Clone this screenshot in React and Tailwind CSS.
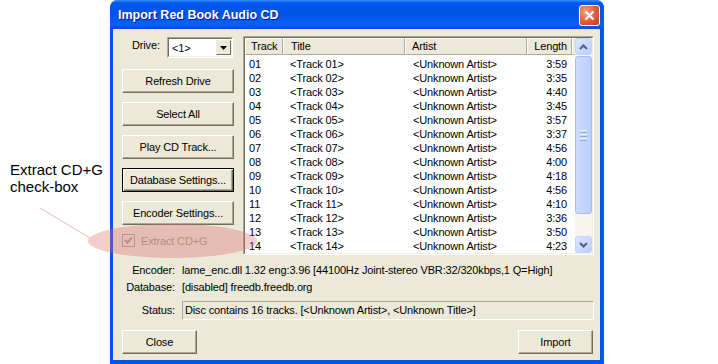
import React from 'react'

const tracks = [
  ['01', '3:59'], ['02', '3:35'], ['03', '4:40'], ['04', '3:45'], ['05', '3:57'],
  ['06', '3:37'], ['07', '4:56'], ['08', '4:00'], ['09', '4:18'], ['10', '4:56'],
  ['11', '4:10'], ['12', '3:36'], ['13', '3:50'], ['14', '4:23'],
]

function Button({ children, isDefault, className = '' }) {
  return (
    <div
      className={
        'flex items-center justify-center h-[24px] bg-[#ece9d8] ' +
        (isDefault
          ? 'border border-black shadow-[inset_1px_1px_0_#fff,inset_-1px_-1px_0_#716f64,inset_-2px_-2px_0_#aca899] '
          : 'border border-t-white border-l-white border-r-[#716f64] border-b-[#716f64] shadow-[inset_-1px_-1px_0_#aca899] ') +
        className
      }
    >
      {children}
    </div>
  )
}

function ScrollArrow({ up }) {
  return (
    <div className="w-[17px] h-[17px] rounded-[3px] border border-[#c3d3fd] bg-[linear-gradient(135deg,#dde8fe,#b9cdfa)] flex items-center justify-center">
      <svg width="9" height="6" viewBox="0 0 9 6">
        <path
          d={up ? 'M1 5 L4.5 1.5 L8 5' : 'M1 1 L4.5 4.5 L8 1'}
          fill="none"
          stroke="#4d6185"
          strokeWidth="2"
        />
      </svg>
    </div>
  )
}

export default function App() {
  return (
    <div className="relative w-[718px] h-[364px] overflow-hidden bg-white flex">
      <div className="w-[110px] shrink-0 pl-[10px] pt-[161px] font-['Liberation_Sans',sans-serif] text-[15px] leading-[17px] text-black">
        Extract CD+G
        <br />
        check-box
      </div>

      <div className="w-[494px] h-[364px] shrink-0 flex flex-col rounded-t-[8px] bg-[#0055ea] font-['Liberation_Sans',sans-serif] text-[11px] tracking-[-0.15px] text-black">
        <div className="h-[29px] flex justify-between pl-[8px] pr-[4px] rounded-t-[8px] bg-[linear-gradient(180deg,#3a8dfb_0%,#0058ee_10%,#0053e8_45%,#0a5ff4_85%,#0048d8_100%)]">
          <div className="pt-[7px] tracking-normal font-bold text-[12.5px] leading-[16px] text-white [text-shadow:1px_1px_0_#0a1883]">
            Import Red Book Audio CD
          </div>
          <div className="mt-[5px] w-[21px] h-[21px] rounded-[3px] border border-white bg-[radial-gradient(circle_at_30%_30%,#f0a08a,#e05a34_55%,#c43c16)] flex items-center justify-center">
            <svg width="11" height="11" viewBox="0 0 11 11">
              <path d="M1.5 1.5 L9.5 9.5 M9.5 1.5 L1.5 9.5" stroke="white" strokeWidth="2.2" />
            </svg>
          </div>
        </div>

        <div className="flex-1 ml-[3px] mr-[4px] mb-[4px] bg-[#ece9d8] flex flex-col pl-[9px] pr-[6px]">
          <div className="flex pt-[7px]">
            <div className="w-[112px] shrink-0 flex flex-col">
              <div className="flex mt-[1px] h-[21px]">
                <div className="w-[45px] pl-[10px] pt-[1px] leading-[14px]">Drive:</div>
                <div className="w-[66px] h-[21px] border border-t-[#aca899] border-l-[#aca899] border-r-white border-b-white">
                  <div className="h-full border border-t-[#716f64] border-l-[#716f64] border-r-[#f1efe2] border-b-[#f1efe2] bg-white flex items-center">
                    <div className="flex-1 pl-[3px] leading-[14px]">&lt;1&gt;</div>
                    <div className="w-[15px] h-[15px] bg-[#ece9d8] border border-t-[#f1efe2] border-l-[#f1efe2] border-r-[#716f64] border-b-[#716f64] flex items-center justify-center">
                      <svg width="7" height="4" viewBox="0 0 7 4">
                        <path d="M0 0 H7 L3.5 4 Z" fill="black" />
                      </svg>
                    </div>
                  </div>
                </div>
              </div>
              <div className="flex flex-col gap-[9px] mt-[11px]">
                <Button>Refresh Drive</Button>
                <Button>Select All</Button>
                <Button>Play CD Track...</Button>
                <Button isDefault>Database Settings...</Button>
                <Button>Encoder Settings...</Button>
              </div>
              <div className="flex items-center mt-[9px] h-[13px]">
                <div className="w-[13px] h-[13px] border border-[#aca899] bg-[#ece9d8] flex items-center justify-center">
                  <svg width="9" height="9" viewBox="0 0 9 9">
                    <path d="M1 4 L3.5 6.5 L8 1.5" fill="none" stroke="#a39d8b" strokeWidth="2" />
                  </svg>
                </div>
                <div className="ml-[6px] text-[#a39d8b] leading-[14px]">Extract CD+G</div>
              </div>
            </div>

            <div className="ml-[9px] w-[352px] h-[219px] border border-t-[#aca899] border-l-[#aca899] border-r-white border-b-white">
              <div className="h-full border border-t-[#716f64] border-l-[#716f64] border-r-[#f1efe2] border-b-[#f1efe2] bg-white flex">
                <div className="flex-1 flex flex-col">
                  <div className="flex h-[17px] leading-[15px] bg-[#ece9d8]">
                    <div className="w-[38px] pl-[5px] border border-t-white border-l-white border-r-[#aca899] border-b-[#aca899]">Track</div>
                    <div className="w-[122px] pl-[7px] border border-t-white border-l-white border-r-[#aca899] border-b-[#aca899]">Title</div>
                    <div className="w-[122px] pl-[6px] border border-t-white border-l-white border-r-[#aca899] border-b-[#aca899]">Artist</div>
                    <div className="w-[45px] pr-[4px] text-right border border-t-white border-l-white border-r-[#aca899] border-b-[#aca899]">Length</div>
                    <div className="flex-1 border border-t-white border-l-white border-b-[#aca899] border-r-[#ece9d8]"></div>
                  </div>
                  <div className="pt-[2px]">
                    {tracks.map(([n, len]) => (
                      <div key={n} className="grid grid-cols-[38px_122px_122px_45px] h-[14px] leading-[14px]">
                        <div className="pl-[4px]">{n}</div>
                        <div className="pl-[7px]">&lt;Track {n}&gt;</div>
                        <div className="pl-[8px]">&lt;Unknown Artist&gt;</div>
                        <div className="pr-[5px] text-right">{len}</div>
                      </div>
                    ))}
                  </div>
                </div>
                <div className="w-[17px] flex flex-col bg-[#f6f5f0]">
                  <ScrollArrow up />
                  <div className="mt-[1px] h-[158px] rounded-[3px] border border-[#a6bdf2] bg-[linear-gradient(90deg,#cddbfd,#bccffb)] flex flex-col items-center justify-center gap-[1px]">
                    <div className="w-[7px] h-[1px] bg-[#eef3fe]"></div>
                    <div className="w-[7px] h-[1px] bg-[#8cabee]"></div>
                    <div className="w-[7px] h-[1px] bg-[#eef3fe]"></div>
                    <div className="w-[7px] h-[1px] bg-[#8cabee]"></div>
                    <div className="w-[7px] h-[1px] bg-[#eef3fe]"></div>
                    <div className="w-[7px] h-[1px] bg-[#8cabee]"></div>
                  </div>
                  <div className="flex-1"></div>
                  <ScrollArrow />
                </div>
              </div>
            </div>
          </div>

          <div className="mt-[7px] -ml-[9px] grid grid-cols-[62px_1fr] gap-x-[7px] leading-[17px]">
            <div className="text-right">Encoder:</div>
            <div>lame_enc.dll 1.32 eng:3.96 [44100Hz Joint-stereo VBR:32/320kbps,1 Q=High]</div>
            <div className="text-right">Database:</div>
            <div>[disabled] freedb.freedb.org</div>
            <div className="text-right mt-[5px] leading-[19px]">Status:</div>
            <div className="mt-[5px] h-[19px] border border-t-[#aca899] border-l-[#aca899] border-r-white border-b-white pl-[2px] leading-[17px]">
              Disc contains 16 tracks. [&lt;Unknown Artist&gt;, &lt;Unknown Title&gt;]
            </div>
          </div>

          <div className="mt-[10px] flex justify-between pr-[1px]">
            <Button className="w-[75px]">Close</Button>
            <Button className="w-[75px]">Import</Button>
          </div>
        </div>
      </div>

      <svg className="absolute left-0 top-0 pointer-events-none" width="718" height="364">
        <line x1="40" y1="208" x2="90" y2="238" stroke="#f0b4b8" strokeWidth="1" />
        <ellipse cx="172.5" cy="241" rx="84.5" ry="17" fill="rgba(220,110,110,0.35)" />
      </svg>
    </div>
  )
}
